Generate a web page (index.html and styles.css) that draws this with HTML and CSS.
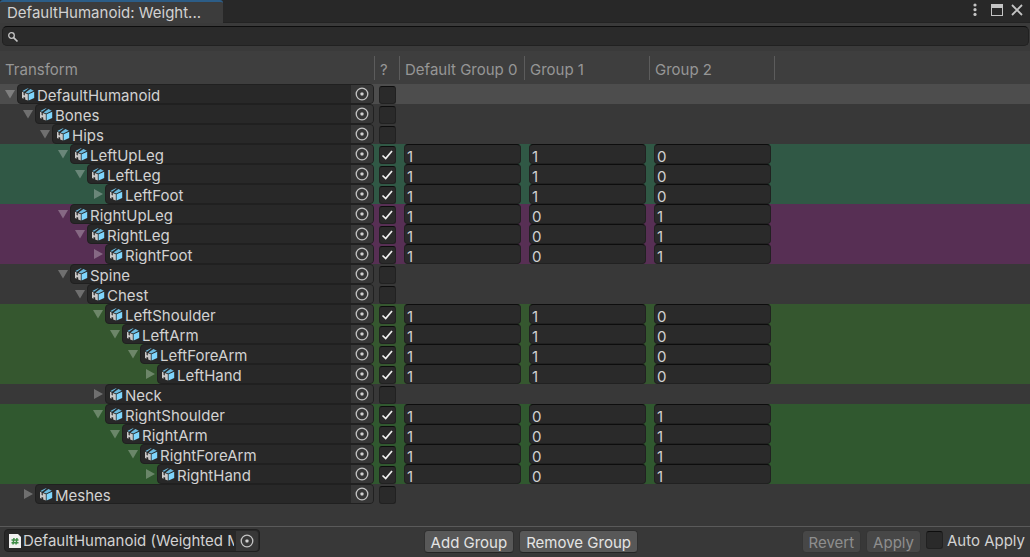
FILE: index.html
```html
<!DOCTYPE html>
<html lang="en">
<head>
<meta charset="utf-8">
<title>DefaultHumanoid: Weighted Mask</title>
<link rel="stylesheet" href="styles.css">
</head>
<body>
<svg class="sprite" aria-hidden="true">
  <symbol id="cube" viewBox="0 0 14 14">
    <path fill="#c8c8c8" d="M1 4.800 2.600 5.500V8L3.800 8.500V6L6.800 7.300V13.600L4.200 12.500V10.600L2.600 9.900V11.700L1 11Z"/>
    <path fill="#7fd6fd" d="M7.600 7.300 13.200 4.700V11L7.600 13.600Z"/>
    <path fill="#6cbbe0" d="M1.400 4 6.200 1.500 7.800 1.300 3 4.700ZM4.600 5.400 9.400 2 12.800 3.800 7.200 6.500Z"/>
  </symbol>
  <symbol id="target" viewBox="0 0 14 14">
    <circle cx="7" cy="7" r="5.8" fill="none" stroke="#c4c4c4" stroke-width="1.3"/>
    <rect x="5.5" y="5.5" width="3" height="3" rx=".8" fill="#d2d2d2"/>
  </symbol>
  <symbol id="fold-open" viewBox="0 0 12 12"><path d="M1 2H11L6 10.5Z"/></symbol>
  <symbol id="fold-closed" viewBox="0 0 12 12"><path d="M2 1V11L11 6Z"/></symbol>
</svg>

<header class="tabbar">
  <h1 class="tab">DefaultHumanoid: Weight...</h1>
  <div class="window-buttons">
    <button aria-label="Menu"><svg width="14" height="14" viewBox="0 0 14 14" fill="#c4c4c4"><circle cx="7" cy="2" r="1.6"/><circle cx="7" cy="6.7" r="1.6"/><circle cx="7" cy="11.4" r="1.6"/></svg></button>
    <button aria-label="Maximize"><svg width="14" height="14" viewBox="0 0 14 14"><path fill="#c4c4c4" fill-rule="evenodd" d="M2 1H14V13H2ZM3 5V12H13V5Z"/></svg></button>
    <button aria-label="Close"><svg width="14" height="14" viewBox="0 0 14 14"><path fill="none" stroke="#c4c4c4" stroke-width="1.8" d="M2 2 12 12M12 2 2 12"/></svg></button>
  </div>
</header>

<div class="toolbar">
  <label class="search">
    <svg width="12" height="12" viewBox="0 0 12 12" fill="none" stroke="#c4c4c4"><circle cx="4.5" cy="4.5" r="2.8" stroke-width="1.3"/><path d="M6.6 6.6 10.5 10.5" stroke-width="1.7"/></svg>
    <input type="text" aria-label="Search">
  </label>
</div>

<main class="content">
  <table class="tree">
    <colgroup><col class="col-name"><col class="col-check"><col class="col-group"><col class="col-group"><col class="col-group"><col></colgroup>
    <thead>
      <tr><th><span>Transform</span></th><th><span>?</span></th><th><span>Default Group 0</span></th><th><span>Group 1</span></th><th><span>Group 2</span></th><th></th></tr>
    </thead>
    <tbody id="rows"></tbody>
  </table>
</main>

<footer class="footer">
  <div class="object-field asset">
    <svg class="script-icon" width="12" height="14" viewBox="0 0 12 14"><path fill="#f0f0f0" d="M0 0H9L12 3V14H0Z"/><path stroke="#3d8b45" stroke-width="1.5" d="M5 4 4 10.500M8 4 7 10.500M2.500 6H9.500M2.500 8.700H9.500"/></svg>
    <span class="object-name">DefaultHumanoid (Weighted Mask)</span>
    <button class="picker" aria-label="Select asset"><svg width="14" height="14"><use href="#target"/></svg></button>
  </div>
  <div class="footer-group">
    <button class="btn">Add Group</button>
    <button class="btn">Remove Group</button>
  </div>
  <div class="footer-group apply-group">
    <button class="btn" disabled>Revert</button>
    <button class="btn" disabled>Apply</button>
    <label class="auto"><input class="check" type="checkbox">Auto Apply</label>
  </div>
</footer>
<script src="tree.js"></script>
</body>
</html>
```
FILE: styles.css
```css
* { box-sizing: border-box; }

body {
  margin: 0;
  min-height: 100vh;
  display: flex;
  flex-direction: column;
  background: #383838;
  color: #d2d2d2;
  font: 15px/20px Inter, "Liberation Sans", sans-serif;
}

button, input { font: inherit; color: inherit; margin: 0; }
button { padding: 0; border: 0; background: none; }
svg { display: block; flex: none; }
.sprite { position: absolute; width: 0; height: 0; }

.tabbar {
  display: flex;
  justify-content: space-between;
  height: 23px;
  background: #282828;
  border-bottom: 1px solid #232323;
}
.tab {
  margin: 0;
  width: 223px;
  height: 23px;
  padding: 1px 7px 0;
  border-top: 2px solid #2c5d87;
  border-radius: 3px 3px 0 0;
  background: #3c3c3c;
  font-size: 15px;
  font-weight: 400;
}
.window-buttons { display: flex; align-items: center; gap: 7px; padding: 0 6px 2px 0; }

.toolbar { padding: 3px 1px 5px 2px; background: #3a3a3a; }
.search {
  display: flex;
  align-items: center;
  gap: 4px;
  height: 20px;
  padding: 1px 4px 0;
  border: 1px solid #212121;
  border-top-color: #0d0d0d;
  border-radius: 5px;
  background: #2a2a2a;
}
.search input { flex: 1; min-width: 0; height: 16px; padding: 0; border: 0; outline: 0; background: none; }

.content { flex: 1; }
.tree { width: 100%; border-collapse: collapse; table-layout: fixed; }
.col-name { width: 375px; }
.col-check { width: 25px; }
.col-group { width: 125px; }
.tree td, .tree th { padding: 0; }
.tree thead { background: #3e3e3e; }
.tree th {
  height: 33px;
  padding: 5px 0 4px;
  color: #969696;
  font-weight: 400;
  text-align: left;
}
.tree th span {
  display: flex;
  align-items: flex-end;
  height: 24px;
  padding: 4px 0 0 5px;
  border-right: 1px solid #5c5c5c;
  white-space: nowrap;
}
.tree td { height: 20px; }

.selected { background: #4d4d4d; }
.teal { background: #305845; }
.purple { background: #572f54; }
.olive { background: #35572f; }
.green { background: #30582f; }

.node { display: flex; align-items: center; padding: 0 1px 0 4px; }
.depth-1 { padding-left: 22px; }
.depth-2 { padding-left: 39px; }
.depth-3 { padding-left: 57px; }
.depth-4 { padding-left: 74px; }
.depth-5 { padding-left: 92px; }
.depth-6 { padding-left: 109px; }
.depth-7 { padding-left: 127px; }
.depth-8 { padding-left: 144px; }
.fold { width: 13px; fill: #fff; opacity: .28; }

.object-field {
  display: flex;
  align-items: center;
  flex: 1;
  min-width: 0;
  height: 20px;
  padding: 0 0 0 3px;
  border: 1px solid #202020;
  border-radius: 4px;
  background: #282828;
}
.object-name {
  flex: 1;
  min-width: 0;
  height: 20px;
  padding-left: 2px;
  white-space: nowrap;
}
.node .object-name { margin-top: 3px; }
.picker {
  display: flex;
  align-items: center;
  justify-content: center;
  width: 22px;
  height: 18px;
  border-radius: 0 3px 3px 0;
  background: #373737;
}

.check {
  appearance: none;
  display: block;
  width: 17px;
  height: 18px;
  border: 1px solid #212121;
  border-top-color: #0d0d0d;
  border-radius: 3px;
  background: #2a2a2a;
}
.check-cell { display: flex; padding: 2px 0 0 4px; height: 20px; position: relative; }
.check-cell svg { position: absolute; left: 6px; top: 5px; pointer-events: none; }

.weight {
  display: block;
  width: 117px;
  height: 20px;
  margin-left: 4px;
  padding: 5px 2px 0;
  border: 1px solid #212121;
  border-top-color: #0d0d0d;
  border-radius: 4px;
  outline: 0;
  background: #2a2a2a;
}

.footer {
  display: flex;
  justify-content: space-between;
  align-items: flex-start;
  height: 31px;
  padding: 2px 5px 0 4px;
  border-top: 1px solid #5a5a5a;
}
.asset { flex: none; width: 256px; height: 23px; padding: 0 1px 0 4px; gap: 2px; }
.asset .object-name { height: 21px; line-height: 22px; padding: 0; overflow: hidden; }
.asset .picker { height: 20px; }
.footer-group { display: flex; align-items: flex-start; gap: 5px; padding-top: 1px; }
.btn {
  height: 23px;
  padding: 2px 6px 0;
  border: 1px solid #303030;
  border-bottom-color: #242424;
  border-radius: 4px;
  background: #585858;
  color: #e4e4e4;
  white-space: nowrap;
}
.btn:disabled { background: #474747; border-color: #353535; color: #8e8e8e; }
.auto { display: flex; gap: 4px; padding-top: 1px; white-space: nowrap; }
```
FILE: tree.js
```javascript
// name, depth, expanded, row colour, weights per group
const nodes = [
  ["DefaultHumanoid", 0, true, "selected"],
  ["Bones", 1, true],
  ["Hips", 2, true],
  ["LeftUpLeg", 3, true, "teal", [1, 1, 0]],
  ["LeftLeg", 4, true, "teal", [1, 1, 0]],
  ["LeftFoot", 5, false, "teal", [1, 1, 0]],
  ["RightUpLeg", 3, true, "purple", [1, 0, 1]],
  ["RightLeg", 4, true, "purple", [1, 0, 1]],
  ["RightFoot", 5, false, "purple", [1, 0, 1]],
  ["Spine", 3, true],
  ["Chest", 4, true],
  ["LeftShoulder", 5, true, "olive", [1, 1, 0]],
  ["LeftArm", 6, true, "olive", [1, 1, 0]],
  ["LeftForeArm", 7, true, "olive", [1, 1, 0]],
  ["LeftHand", 8, false, "olive", [1, 1, 0]],
  ["Neck", 5, false],
  ["RightShoulder", 5, true, "green", [1, 0, 1]],
  ["RightArm", 6, true, "green", [1, 0, 1]],
  ["RightForeArm", 7, true, "green", [1, 0, 1]],
  ["RightHand", 8, false, "green", [1, 0, 1]],
  ["Meshes", 1, false]
];

const tick = '<svg width="13" height="12" viewBox="0 0 13 12"><path d="M1.500 6.500 4.700 9.500 11 2" fill="none" stroke="#f0f0f0" stroke-width="1.700"/></svg>';

document.getElementById("rows").innerHTML = nodes.map(([name, depth, open, color = "", weights]) => `
  <tr class="${color}">
    <td><div class="node depth-${depth}">
      <button class="fold" aria-label="Toggle ${name}" aria-expanded="${open}"><svg width="12" height="12"><use href="#fold-${open ? "open" : "closed"}"/></svg></button>
      <div class="object-field">
        <svg width="14" height="14"><use href="#cube"/></svg>
        <span class="object-name">${name}</span>
        <button class="picker" aria-label="Select ${name}"><svg width="14" height="14"><use href="#target"/></svg></button>
      </div>
    </div></td>
    <td><div class="check-cell"><input class="check" type="checkbox" aria-label="Include ${name}" ${weights ? "checked" : ""}>${weights ? tick : ""}</div></td>
    ${[0, 1, 2].map(i => `<td>${weights ? `<input class="weight" type="text" aria-label="${name} group ${i}" value="${weights[i]}">` : ""}</td>`).join("")}
    <td></td>
  </tr>`).join("");
```
